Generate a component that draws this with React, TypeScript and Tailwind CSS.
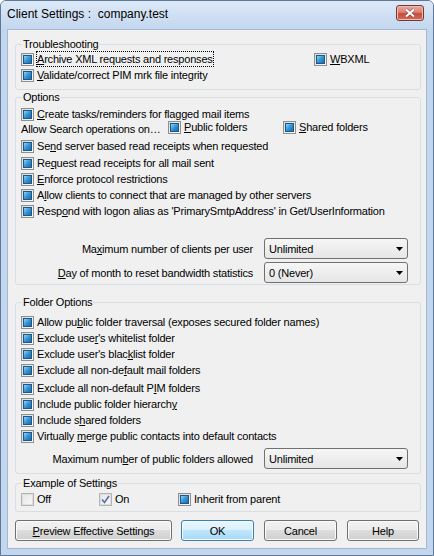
import React from 'react';

type State = 'mixed' | 'off' | 'on';

// "&" marks the access key, like a Win32 resource string
const Acc: React.FC<{ text: string }> = ({ text }) => {
  const i = text.indexOf('&');
  if (i < 0) return <>{text}</>;
  return (
    <>
      {text.slice(0, i)}
      <u>{text[i + 1]}</u>
      {text.slice(i + 2)}
    </>
  );
};

const Box: React.FC<{ state?: State }> = ({ state = 'mixed' }) => {
  if (state === 'mixed') {
    return (
      <span className="mt-[2px] flex h-[13px] w-[13px] shrink-0 items-center justify-center border border-[#8e8f8f] bg-linear-to-br from-[#dadada] to-[#fbfbfb]">
        <span className="h-[9px] w-[9px] border border-[#1f5687] bg-linear-to-br from-[#8ad6f7] via-[#3594d4] to-[#1c6cae]" />
      </span>
    );
  }
  return (
    <span className="mt-[2px] flex h-[13px] w-[13px] shrink-0 items-center justify-center border border-[#b4b4b4] bg-[#f4f4f4]">
      <span className="flex h-[11px] w-[11px] items-center justify-center border border-[#dedede] bg-linear-to-br from-[#e8e8e8] to-[#f7f7f7]">
        {state === 'on' && (
          <svg width="9" height="9" viewBox="0 0 9 9">
            <path d="M1 4.5 L3.5 7.5 L8 1" fill="none" stroke="#5a6fa6" strokeWidth="1.6" />
          </svg>
        )}
      </span>
    </span>
  );
};

const Check: React.FC<{ label: string; state?: State; focus?: boolean; className?: string }> = ({
  label,
  state,
  focus,
  className,
}) => (
  <div className={`flex h-[16px] items-start ${className ?? ''}`}>
    <Box state={state} />
    <span
      className={`ml-[2px] h-[16px] whitespace-nowrap border leading-[14px] ${
        focus ? 'border-dotted border-black' : 'border-transparent'
      }`}
    >
      <Acc text={label} />
    </span>
  </div>
);

const ComboRow: React.FC<{ label: string; value: string; className?: string }> = ({ label, value, className }) => (
  <div className={`flex h-[21px] items-center justify-end pr-[7px] ${className ?? ''}`}>
    <span className="mr-[11px] whitespace-nowrap leading-[14px]">
      <Acc text={label} />
    </span>
    <div className="flex h-full w-[144px] items-center justify-between rounded-[3px] border border-[#707070] bg-linear-to-b from-[#f6f6f6] to-[#e6e6e6] pl-[4px] pr-[4px]">
      <span className="leading-[14px]">{value}</span>
      <svg width="7" height="4" viewBox="0 0 7 4">
        <path d="M0 0h7L3.5 4z" fill="#000" />
      </svg>
    </div>
  </div>
);

const Group: React.FC<{ title: string; className?: string; children: React.ReactNode }> = ({
  title,
  className,
  children,
}) => (
  <fieldset className={`rounded-[3px] border border-[#d5dfe5] pl-[5px] pr-[5px] ${className ?? ''}`}>
    <legend className="ml-[1px] px-[1px] leading-[14px]">{title}</legend>
    {children}
  </fieldset>
);

const Btn: React.FC<{ label: string; className: string; def?: boolean }> = ({ label, className, def }) => (
  <button
    className={`flex h-[21px] items-center justify-center rounded-[3px] border leading-[14px] ${
      def
        ? 'border-[#3c7fb1] bg-[linear-gradient(#eaf6fd,#d9f0fc_50%,#bee6fd_50%,#a7d9f5)] shadow-[inset_0_0_0_1px_#f4fbfe]'
        : 'border-[#707070] bg-[linear-gradient(#f2f2f2,#ebebeb_50%,#dddddd_50%,#cfcfcf)] shadow-[inset_0_0_0_1px_#fbfbfb]'
    } ${className}`}
  >
    <Acc text={label} />
  </button>
);

export default function App() {
  return (
    <div className="h-[556px] w-[434px] overflow-hidden rounded-t-[6px] border border-[#5d7899] bg-[#c2d6ee] font-['Liberation_Sans',Arial,sans-serif] text-[11px] tracking-[-0.2px] text-black">
      <div className="flex h-[29px] items-start justify-between bg-linear-to-b from-[#dde9f7] to-[#c2d6ee] pl-[6px] pr-[9px]">
        <span className="whitespace-pre pt-[5px] text-[12px] leading-[16px] tracking-normal">Client Settings :  company.test</span>
        <div className="mt-[4px] flex h-[16px] w-[28px] items-center justify-center rounded-[3px] border border-[#7b3530] bg-[linear-gradient(#e9aa9f,#d88174_45%,#c54c3d_55%,#d06d5b)] shadow-[inset_0_0_0_1px_#eebbb2]">
          <svg width="12" height="10" viewBox="0 0 12 10">
            <path d="M2 1.5 L10 8.5 M10 1.5 L2 8.5" stroke="#5b2320" strokeWidth="3.4" strokeOpacity="0.55" />
            <path d="M2 1.5 L10 8.5 M10 1.5 L2 8.5" stroke="#fff" strokeWidth="2.2" />
          </svg>
        </div>
      </div>

      <div className="mx-[7px] h-[518px] bg-[#f0f0f0] pl-[7px] pr-[5px] pt-[7px] shadow-[0_0_0_1px_#a3b8d2]">
        <Group title="Troubleshooting" className="pb-[6px]">
          <div className="flex">
            <div className="w-[293px]">
              <Check label="&Archive XML requests and responses" focus />
            </div>
            <Check label="&WBXML" />
          </div>
          <Check label="&Validate/correct PIM mrk file integrity" />
        </Group>

        <Group title="Options" className="pb-[1px]">
          <Check className="mt-[2px]" label="&Create tasks/reminders for flagged mail items" />
          <div className="-mt-[3px] flex h-[16px] items-start">
            <span className="w-[147px] whitespace-nowrap pt-[3px] leading-[14px]">Allow Search operations on…</span>
            <div className="w-[115px]">
              <Check label="&Public folders" />
            </div>
            <Check label="&Shared folders" />
          </div>
          <Check className="mt-[3px]" label="Se&nd server based read receipts when requested" />
          <Check className="mt-[1px]" label="Re&quest read receipts for all mail sent" />
          <Check label="&Enforce protocol restrictions" />
          <Check label="A&llow clients to connect that are managed by other servers" />
          <Check label="Resp&ond with logon alias as 'PrimarySmtpAddress' in Get/UserInformation" />
          <ComboRow className="mt-[19px]" label="Ma&ximum number of clients per user" value="Unlimited" />
          <ComboRow className="mt-[3px]" label="&Day of month to reset bandwidth statistics" value="0 (Never)" />
        </Group>

        <Group title="Folder Options" className="mt-[10px] pb-[4px]">
          <Check className="mt-[5px]" label="Allow pu&blic folder traversal (exposes secured folder names)" />
          <Check label="Exclude use&r's whitelist folder" />
          <Check label="Exclude user's blac&klist folder" />
          <Check label="Exclude all non-de&fault mail folders" />
          <Check className="mt-[2px]" label="Exclude all non-default P&IM folders" />
          <Check label="Include public folder hierarch&y" />
          <Check label="Include s&hared folders" />
          <Check label="Virtually &merge public contacts into default contacts" />
          <ComboRow className="mt-[4px]" label="Maximum num&ber of public folders allowed" value="Unlimited" />
        </Group>

        <Group title="Example of Settings" className="mt-[2px] pb-[4px]">
          <div className="mt-[1px] flex">
            <div className="w-[78px]">
              <Check state="off" label="Off" />
            </div>
            <div className="w-[79px]">
              <Check state="on" label="On" />
            </div>
            <Check label="Inherit from parent" />
          </div>
        </Group>

        <div className="mt-[8px] flex">
          <Btn className="w-[157px]" label="&Preview Effective Settings" />
          <Btn className="ml-[9px] w-[73px]" label="OK" def />
          <Btn className="ml-[10px] w-[73px]" label="Cancel" />
          <Btn className="ml-[10px] w-[72px]" label="Help" />
        </div>
      </div>
    </div>
  );
}
